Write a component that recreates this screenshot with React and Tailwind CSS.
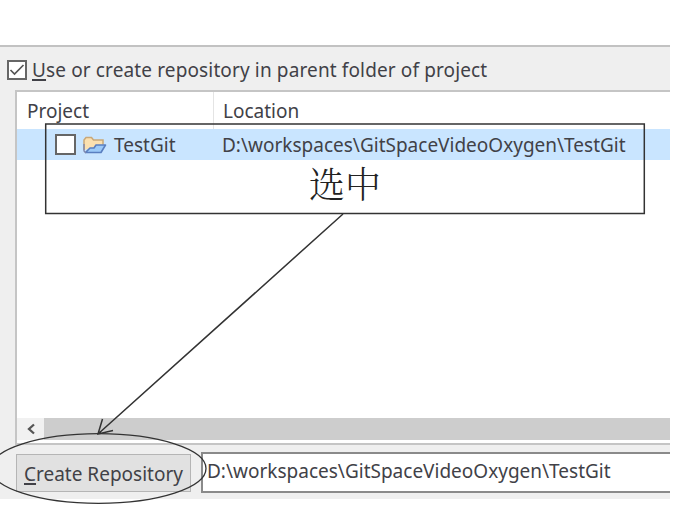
import React from 'react';

const repoPath = 'D:\\workspaces\\GitSpaceVideoOxygen\\TestGit';

function FolderIcon(){
  return (
    <svg width="25" height="20" viewBox="0 0 25 20" className="block shrink-0">
      <path d="M2 15 V5 L4 2.5 H9.5 L11.5 5 H21 V9.5" fill="#fbe0b0" stroke="#c9a878" strokeWidth="1.5" />
      <path d="M3.5 17.5 L8 13 H12 L14 10 H23.5 L19 17.5 Z" fill="#9ccaf8" stroke="#5a7fc0" strokeWidth="1.6" strokeLinejoin="round" />
      <path d="M2 9 V16 L4 18" fill="none" stroke="#7d87ad" strokeWidth="1.4" />
    </svg>
  );
}

// hand-drawn marks over the dialog: box, arrow and ellipse
function Annotations(){
  return (
    <div className="absolute inset-0 overflow-hidden">
      <svg width="678" height="508" viewBox="0 0 678 508" fill="none" stroke="#333" strokeWidth="1.5">
        <rect x="45.7" y="124" width="598.6" height="89.5" />
        <path d="M343 214 L98 434 M102.5 419 L98 434 L113 430.5" />
        <ellipse cx="98.5" cy="468.5" rx="107.5" ry="34.8" strokeWidth="1.3" />
      </svg>
      <div className="absolute left-[309px] top-[163px] text-[36px] leading-[40px] font-light text-[#222] whitespace-nowrap font-['Noto_Serif_CJK_SC','Noto_Sans_CJK_SC',serif]">选中</div>
    </div>
  );
}

export default function App(){
  return (
    <div className="relative w-[678px] h-[508px] overflow-hidden bg-white pt-[45px] text-[19px] text-[#414147] whitespace-nowrap font-['Noto_Sans',sans-serif]">
      <div className="flex flex-col w-[670px] h-[454px] bg-[#efefef] border-t-2 border-[#c2c2c2]">
        <label className="flex items-center h-[43px] pl-[7px] pt-[2px]">
          <span className="w-[20px] h-[20px] bg-white border-2 border-[#666]">
            <svg width="16" height="16" viewBox="0 0 16 16" fill="none" stroke="#555" strokeWidth="1.7">
              <path d="M1.5 8 L5.5 12 L14.5 3" />
            </svg>
          </span>
          <span className="ml-[5px] pt-[2px] tracking-[0.13px]"><u className="underline-offset-2 decoration-2">U</u>se or create repository in parent folder of project</span>
        </label>

        <div className="flex flex-col ml-[15px] h-[355px] bg-white border-t-2 border-l-2 border-b-2 border-[#c5c5c5]">
          <div className="flex h-[37px] items-center">
            <div className="w-[197px] h-full pl-[10px] pt-[5px] border-r border-[#e4e4e4]">Project</div>
            <div className="h-full pl-[9px] pt-[5px]">Location</div>
          </div>
          <div className="flex items-center h-[31px] bg-[#c9e5ff]">
            <div className="flex items-center w-[205px] pl-[38px]">
              <span className="w-[21px] h-[21px] bg-white border-2 border-[#666]" />
              <span className="ml-[6px]"><FolderIcon /></span>
              <span className="ml-[7px] pt-[2px]">TestGit</span>
            </div>
            <div className="pt-[2px]">{repoPath}</div>
          </div>
          <div className="flex-1" />
          <div className="flex h-[22px] mb-[3px]">
            <div className="flex items-center justify-center w-[27px] bg-[#f1f1f1]">
              <svg width="10" height="12" viewBox="0 0 10 12" fill="none" stroke="#555" strokeWidth="2.3">
                <path d="M8 1.5 L3 6 L8 10.5" />
              </svg>
            </div>
            <div className="flex-1 bg-[#cdcdcd]" />
          </div>
        </div>

        <div className="flex items-start mt-[7px] pl-[16px]">
          <button className="mt-[2px] pt-[2px] w-[175px] h-[38px] bg-[#e1e1e1] border-[1.5px] border-[#b5b5b5]"><u className="underline-offset-2 decoration-2">C</u>reate Repository</button>
          <div className="ml-[10px] flex-1 h-[41px] bg-white border-y-2 border-l-2 border-[#8a8a8a] pl-[4px] pt-[3px]">{repoPath}</div>
        </div>
      </div>
      <Annotations />
    </div>
  );
}
